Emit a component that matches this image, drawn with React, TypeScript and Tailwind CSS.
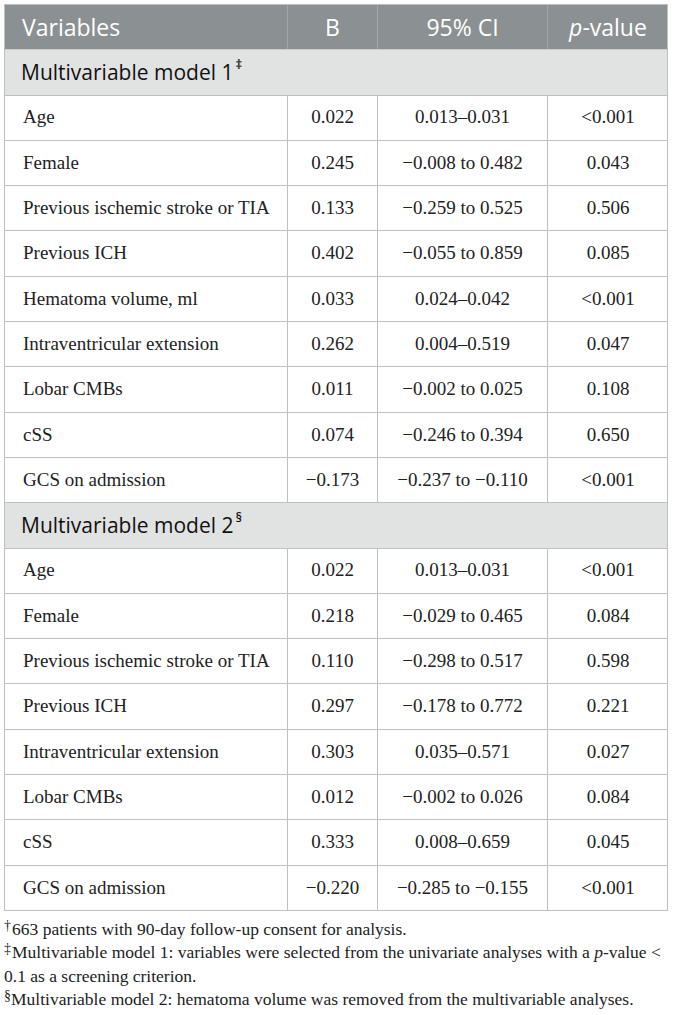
const sections = [
  {
    title: "Multivariable model 1",
    mark: "‡",
    rows: [
      ["Age", "0.022", "0.013–0.031", "<0.001"],
      ["Female", "0.245", "−0.008 to 0.482", "0.043"],
      ["Previous ischemic stroke or TIA", "0.133", "−0.259 to 0.525", "0.506"],
      ["Previous ICH", "0.402", "−0.055 to 0.859", "0.085"],
      ["Hematoma volume, ml", "0.033", "0.024–0.042", "<0.001"],
      ["Intraventricular extension", "0.262", "0.004–0.519", "0.047"],
      ["Lobar CMBs", "0.011", "−0.002 to 0.025", "0.108"],
      ["cSS", "0.074", "−0.246 to 0.394", "0.650"],
      ["GCS on admission", "−0.173", "−0.237 to −0.110", "<0.001"],
    ],
  },
  {
    title: "Multivariable model 2",
    mark: "§",
    rows: [
      ["Age", "0.022", "0.013–0.031", "<0.001"],
      ["Female", "0.218", "−0.029 to 0.465", "0.084"],
      ["Previous ischemic stroke or TIA", "0.110", "−0.298 to 0.517", "0.598"],
      ["Previous ICH", "0.297", "−0.178 to 0.772", "0.221"],
      ["Intraventricular extension", "0.303", "0.035–0.571", "0.027"],
      ["Lobar CMBs", "0.012", "−0.002 to 0.026", "0.084"],
      ["cSS", "0.333", "0.008–0.659", "0.045"],
      ["GCS on admission", "−0.220", "−0.285 to −0.155", "<0.001"],
    ],
  },
];

const cols = "grid grid-cols-[283px_90px_170px_120px]";

export default function App() {
  return (
    <div className="w-[673px] h-[1015px] bg-white pt-[4px] pl-[4px]">
      {/* Table */}
      <div className="w-[664px] border border-[#bdbfc0] border-b-0">
        {/* Header */}
        <div
          className={`${cols} h-[45.3px] bg-[#8b9092] border-b border-[#c9cbcc] text-white text-[23px] font-['Open_Sans',sans-serif]`}
        >
          <div className="flex items-center pl-[17px] border-r border-[#a3a7a9]">Variables</div>
          <div className="flex items-center justify-center border-r border-[#a3a7a9]">B</div>
          <div className="flex items-center justify-center border-r border-[#a3a7a9]">95% CI</div>
          <div className="flex items-center justify-center">
            <span className="italic">p</span>-value
          </div>
        </div>

        {sections.map((section) => (
          <div key={section.title}>
            <div className="h-[45.3px] flex items-center pl-[16px] bg-[#e1e2e2] border-b border-[#bdbfc0] text-[21px] text-[#111] font-['Open_Sans',sans-serif]">
              {section.title}
              <sup className="text-[13px] -top-[8px] ml-[2px] font-semibold">{section.mark}</sup>
            </div>
            {section.rows.map((row, i) => (
              <div
                key={i}
                className={`${cols} h-[45.3px] border-b border-[#bdbfc0] text-[19px] text-[#222] font-['Liberation_Serif',serif]`}
              >
                <div className="flex items-center pl-[18px] border-r border-[#bdbfc0]">{row[0]}</div>
                <div className="flex items-center justify-center border-r border-[#bdbfc0]">{row[1]}</div>
                <div className="flex items-center justify-center border-r border-[#bdbfc0]">{row[2]}</div>
                <div className="flex items-center justify-center">{row[3]}</div>
              </div>
            ))}
          </div>
        ))}
      </div>

      {/* Footnotes */}
      <div className="mt-[7px] text-[17.5px] leading-[23.5px] text-[#222] font-['Liberation_Serif',serif] whitespace-nowrap">
        <p>
          <sup className="text-[14px] -top-[5px] mr-[1px]">†</sup>663 patients with 90-day follow-up consent for analysis.
        </p>
        <p>
          <sup className="text-[14px] -top-[5px] mr-[1px]">‡</sup>Multivariable model 1: variables were selected from the univariate analyses with a <span className="italic">p</span>-value &lt;
          <br />
          0.1 as a screening criterion.
        </p>
        <p>
          <sup className="text-[14px] -top-[5px]">§</sup>Multivariable model 2: hematoma volume was removed from the multivariable analyses.
        </p>
      </div>
    </div>
  );
}
